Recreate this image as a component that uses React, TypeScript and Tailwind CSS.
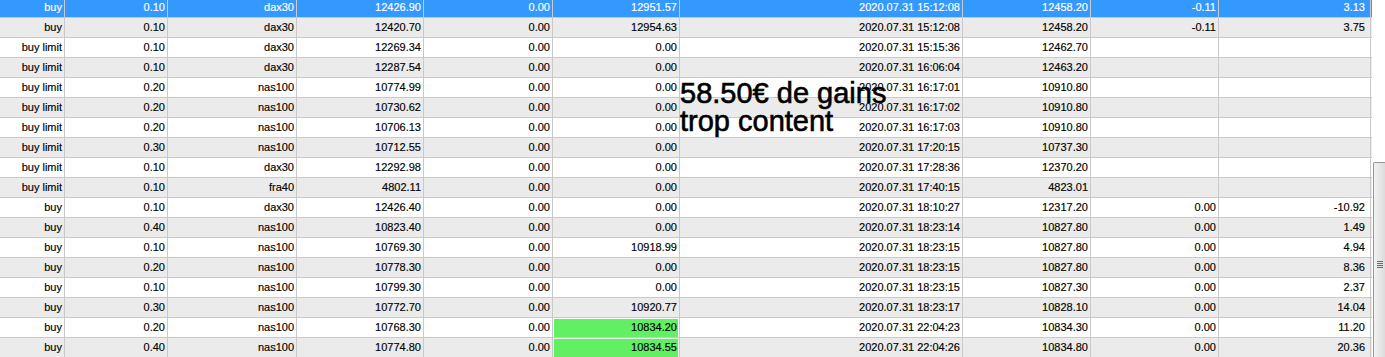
import React from "react";

type Row = {
  c: string[];
  sel?: boolean;
  green?: boolean;
};

const widths = [
  "w-[65px]",
  "w-[103px]",
  "w-[129px]",
  "w-[127px]",
  "w-[129px]",
  "w-[127px]",
  "w-[283px]",
  "w-[128px]",
  "w-[128px]",
  "w-[152px]",
];

const rows: Row[] = [
  { c: ["buy", "0.10", "dax30", "12426.90", "0.00", "12951.57", "2020.07.31 15:12:08", "12458.20", "-0.11", "3.13"], sel: true },
  { c: ["buy", "0.10", "dax30", "12420.70", "0.00", "12954.63", "2020.07.31 15:12:08", "12458.20", "-0.11", "3.75"] },
  { c: ["buy limit", "0.10", "dax30", "12269.34", "0.00", "0.00", "2020.07.31 15:15:36", "12462.70", "", ""] },
  { c: ["buy limit", "0.10", "dax30", "12287.54", "0.00", "0.00", "2020.07.31 16:06:04", "12463.20", "", ""] },
  { c: ["buy limit", "0.20", "nas100", "10774.99", "0.00", "0.00", "2020.07.31 16:17:01", "10910.80", "", ""] },
  { c: ["buy limit", "0.20", "nas100", "10730.62", "0.00", "0.00", "2020.07.31 16:17:02", "10910.80", "", ""] },
  { c: ["buy limit", "0.20", "nas100", "10706.13", "0.00", "0.00", "2020.07.31 16:17:03", "10910.80", "", ""] },
  { c: ["buy limit", "0.30", "nas100", "10712.55", "0.00", "0.00", "2020.07.31 17:20:15", "10737.30", "", ""] },
  { c: ["buy limit", "0.10", "dax30", "12292.98", "0.00", "0.00", "2020.07.31 17:28:36", "12370.20", "", ""] },
  { c: ["buy limit", "0.10", "fra40", "4802.11", "0.00", "0.00", "2020.07.31 17:40:15", "4823.01", "", ""] },
  { c: ["buy", "0.10", "dax30", "12426.40", "0.00", "0.00", "2020.07.31 18:10:27", "12317.20", "0.00", "-10.92"] },
  { c: ["buy", "0.40", "nas100", "10823.40", "0.00", "0.00", "2020.07.31 18:23:14", "10827.80", "0.00", "1.49"] },
  { c: ["buy", "0.10", "nas100", "10769.30", "0.00", "10918.99", "2020.07.31 18:23:15", "10827.80", "0.00", "4.94"] },
  { c: ["buy", "0.20", "nas100", "10778.30", "0.00", "0.00", "2020.07.31 18:23:15", "10827.80", "0.00", "8.36"] },
  { c: ["buy", "0.10", "nas100", "10799.30", "0.00", "0.00", "2020.07.31 18:23:15", "10827.30", "0.00", "2.37"] },
  { c: ["buy", "0.30", "nas100", "10772.70", "0.00", "10920.77", "2020.07.31 18:23:17", "10828.10", "0.00", "14.04"] },
  { c: ["buy", "0.20", "nas100", "10768.30", "0.00", "10834.20", "2020.07.31 22:04:23", "10834.30", "0.00", "11.20"], green: true },
  { c: ["buy", "0.40", "nas100", "10774.80", "0.00", "10834.55", "2020.07.31 22:04:26", "10834.80", "0.00", "20.36"], green: true },
];

export default function App() {
  return (
    <div
      className="relative w-[1385px] h-[357px] overflow-hidden bg-white text-black"
      style={{ fontFamily: '"Liberation Sans", Arial, sans-serif' }}
    >
      <div className="flex">
        <div className="w-[1372px] mt-[-2px] text-[11px] leading-[19px] [-webkit-text-stroke:0.15px_currentColor]">
          {rows.map((r, i) => {
            const bg = r.sel
              ? "bg-[#3399ff] text-white"
              : i % 2 === 1
              ? "bg-[#ebebeb] text-black"
              : "bg-white text-black";
            return (
              <div key={i} className={`flex h-[20px] border-b border-[#c9c9c9] ${bg}`}>
                {r.c.map((v, j) => {
                  const last = j === r.c.length - 1;
                  const green = r.green && j === 5;
                  return (
                    <div
                      key={j}
                      className={`${widths[j]} shrink-0 border-r border-[#c9c9c9] text-right whitespace-nowrap overflow-hidden ${
                        green ? "p-[1px]" : last ? "pr-[5px]" : "pr-[2px]"
                      }`}
                    >
                      {green ? (
                        <div className="h-[18px] leading-[17px] bg-[#63ef63] pr-[1px]">{v}</div>
                      ) : (
                        v
                      )}
                    </div>
                  );
                })}
              </div>
            );
          })}
        </div>
        <div className="w-[13px] h-[357px] flex flex-col bg-white">
          <div className="h-[162px]" />
          <div className="flex-1 ml-[1px] border border-r-0 border-b-0 border-[#979797] rounded-tl-[2px] bg-gradient-to-r from-[#f2f2f2] to-[#dcdcdc] flex flex-col items-center">
            <div className="h-[98px]" />
            <div className="flex flex-col gap-[1px] w-[6px]">
              <div className="h-[1px] bg-[#6a6a6a]" />
              <div className="h-[1px] bg-[#6a6a6a]" />
              <div className="h-[1px] bg-[#6a6a6a]" />
              <div className="h-[1px] bg-[#6a6a6a]" />
            </div>
          </div>
        </div>
      </div>
      <div className="absolute left-[680px] top-[80px] text-[29px] leading-[27.5px] text-black whitespace-nowrap [-webkit-text-stroke:0.6px_black]">
        <div>58.50€ de gains</div>
        <div>trop content</div>
      </div>
    </div>
  );
}
